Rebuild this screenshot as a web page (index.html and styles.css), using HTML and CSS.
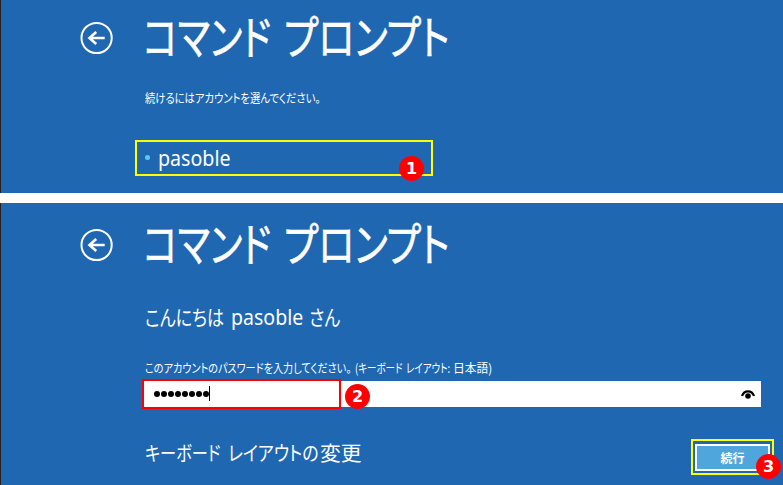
FILE: index.html
```html
<!DOCTYPE html>
<html lang="ja">
<head>
<meta charset="utf-8">
<title>コマンド プロンプト</title>
<link rel="stylesheet" href="styles.css">
</head>
<body>
<section class="panel panel-account">
  <header class="head">
    <svg class="back" viewBox="0 0 34 34"><circle cx="16.600" cy="17" r="15.100"/><path d="M24.700 17H10M16.200 11L9.500 17l6.700 6"/></svg>
    <h1 class="title"><span class="seg t1">コマンド</span><span class="seg t2">プロンプト</span></h1>
  </header>
  <p class="note"><span class="seg n1">続けるにはアカウントを選んでください。</span></p>
  <div class="account"><i class="dot"></i><span class="name">pasoble</span><b class="badge b1">1</b></div>
</section>
<section class="panel panel-password">
  <header class="head">
    <svg class="back" viewBox="0 0 34 34"><circle cx="16.600" cy="17" r="15.100"/><path d="M24.700 17H10M16.200 11L9.500 17l6.700 6"/></svg>
    <h1 class="title"><span class="seg t1">コマンド</span><span class="seg t2">プロンプト</span></h1>
  </header>
  <p class="hello"><span class="seg h1">こんにちは</span><span class="seg h2">pasoble</span><span class="seg h3">さん</span></p>
  <p class="prompt"><span class="seg p1">このアカウントのパスワードを入力してください。</span><span class="seg p2">(キーボード</span><span class="seg p3">レイアウト:</span><span class="seg p4">日本語)</span></p>
  <div class="field">
    <div class="entry"><i></i><i></i><i></i><i></i><i></i><i></i><i></i><i></i><span class="caret"></span></div>
    <b class="badge b2">2</b>
    <svg class="eye" viewBox="0 0 14 10"><path d="M1 6C3.200-.1 10.800-.1 13 6"/><circle cx="7" cy="6" r="2.800"/></svg>
  </div>
  <footer class="foot">
    <span class="layout"><span class="seg k1">キーボード</span><span class="seg k2">レイアウトの</span><span class="seg k3">変更</span></span>
    <div class="mark"><button class="next">続行</button><b class="badge b3">3</b></div>
  </footer>
</section>
</body>
</html>
```
FILE: styles.css
```css
* { box-sizing: border-box; }
body {
  margin: 0;
  width: 783px;
  height: 485px;
  overflow: hidden;
  display: flex;
  flex-direction: column;
  gap: 10px;
  background: #fff;
  color: #fff;
  font-family: "Noto Sans CJK JP", "Noto Sans", sans-serif;
}
h1, p { margin: 0; font-weight: 400; }
.panel { background: #2067b2; border-left: 1px solid #222; flex: none; }
.panel-account { height: 193px; }
.panel-password { height: 282px; }
.head { display: flex; height: 76px; padding-left: 79px; }
.panel-password .head { height: 90px; }
.back { width: 34px; height: 34px; margin-top: 21px; fill: none; stroke: #fff; stroke-width: 2; flex: none; }
.panel-password .back { margin-top: 25px; }
.back path { stroke-width: 2.600; }
.title { display: flex; margin-left: 29px; font-size: 46px; line-height: 68px; height: 68px; -webkit-text-stroke: .6px #fff; }
.panel-password .title { margin-top: 4px; }
.seg {
  display: inline-block;
  flex: none;
  white-space: nowrap;
  font-feature-settings: "palt";
  transform-origin: 0 50%;
}
.t1 { width: 141px; transform: scaleX(.79); }
.t2 { transform: scaleX(.81); }
.note { display: flex; height: 44px; padding-left: 144px; font-size: 12.500px; line-height: 43px; }
.n1 { transform: scaleX(.825); }
.account {
  position: relative;
  display: flex;
  align-items: center;
  width: 298px;
  height: 36px;
  margin: 20px 0 0 134px;
  padding-left: 8px;
  border: 2px solid #ff0;
}
.dot { width: 5px; height: 5px; border-radius: 50%; background: #5bc8f0; margin: -2px 8px 0 0; }
.name { font: 21px/32px "Noto Sans", sans-serif; transform: scaleX(.935); transform-origin: 0 50%; }
.badge {
  position: absolute;
  width: 25px;
  height: 25px;
  border-radius: 50%;
  background: #f00;
  text-align: center;
  font: bold 16px/25px "DejaVu Sans", sans-serif;
}
.b1 { left: 262px; top: 14px; }
.hello { display: flex; height: 48px; padding-left: 144px; font-size: 21px; line-height: 46px; }
.h1 { width: 86px; transform: scaleX(.81); }
.h2 { width: 78px; font-family: "Noto Sans", sans-serif; line-height: 48px; transform: scaleX(.93); }
.h3 { transform: scaleX(.81); }
.prompt { display: flex; height: 38px; padding-left: 144px; font-size: 12.500px; line-height: 54px; }
.p1 { width: 210px; transform: scaleX(.81); }
.p2 { width: 51px; transform: scaleX(.76); }
.p3 { width: 47px; transform: scaleX(.76); }
.p4 { transform: scaleX(.94); }
.field {
  position: relative;
  display: flex;
  justify-content: space-between;
  width: 617px;
  height: 26px;
  margin: 2px 0 0 143px;
  background: #fff;
}
.entry {
  display: flex;
  align-items: center;
  gap: 1px;
  width: 199px;
  height: 30px;
  margin: -2px 0 0 -2px;
  padding-left: 10px;
  border: 2px solid #f00;
}
.entry i { width: 6px; height: 6px; border-radius: 50%; background: #000; }
.caret { width: 1px; height: 15px; background: #000; margin: -2px 0 0 -1px; }
.b2 { left: 201px; top: 3px; }
.eye { width: 14px; height: 10px; margin: 9px 6px 0 0; fill: none; stroke: #000; stroke-width: 2.200; }
.eye circle { fill: #000; stroke: none; }
.foot { display: flex; justify-content: space-between; padding: 32px 9px 0 144px; }
.layout { display: flex; font-size: 20px; line-height: 28px; }
.k1 { width: 83px; transform: scaleX(.81); }
.k2 { width: 92px; transform: scaleX(.85); }
.k3 { transform: scaleX(1.040); }
.mark { position: relative; width: 83px; height: 36px; padding: 2px; border: 2px solid #ff0; }
.next {
  display: block;
  width: 75px;
  height: 27px;
  margin-top: 1px;
  padding: 0;
  border: 2px solid #fff;
  background: #4fa6dd;
  color: #fff;
  font: bold 12px/21px "Noto Sans CJK JP", sans-serif;
}
.b3 { left: 63px; top: 13px; }
```
